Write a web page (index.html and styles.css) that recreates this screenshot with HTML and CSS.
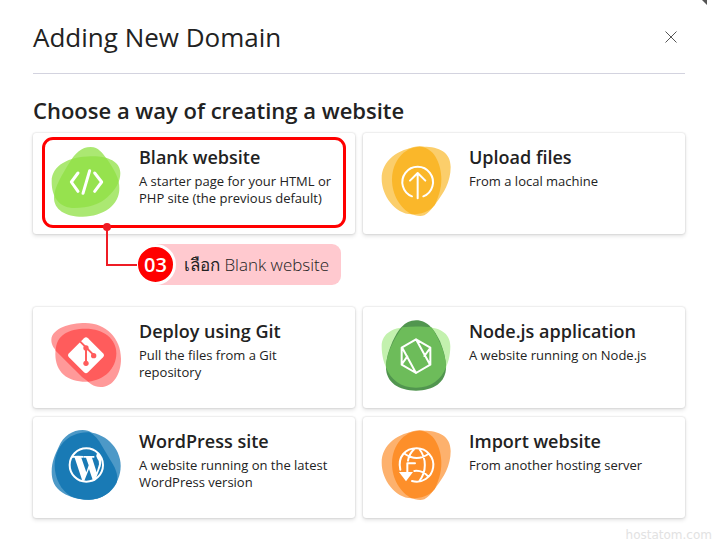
FILE: index.html
```html
<!DOCTYPE html>
<html lang="en">
<head>
    <meta charset="UTF-8">
    <meta name="viewport" content="width=device-width, initial-scale=1.0">
    <title>Adding New Domain</title>
    <link rel="stylesheet" href="styles.css">
</head>
<body>
    <span class="corner"></span>
    <header class="page-header">
        <h1>Adding New Domain</h1>
        <button class="close" type="button" aria-label="Close">
            <svg viewBox="0 0 12 12"><path d="M.5 .5l11 11M11.5 .5l-11 11"/></svg>
        </button>
    </header>

    <main>
        <h2>Choose a way of creating a website</h2>
        <div class="cards">
            <a class="card highlighted" href="#blank">
                <svg class="icon" viewBox="93 66 210 210">
                    <path fill="#8fe043" fill-opacity=".75" d="M212 66C236 66 247 84 263 105C282 133 299 160 298 190C299 240 250 275 188 275C135 275 102 253 102 218C102 188 128 146 149 112C166 84 184 66 212 66Z"/>
                    <path fill="#8fe043" fill-opacity=".75" d="M214 94C262 93 301 109 301 144C301 170 288 192 262 217C239 239 204 249 164 249C117 249 95 215 95 170C95 121 146 95 214 94Z"/>
                    <path class="line thick" d="M174 144L154 171L174 199M209 137L189 205M224 144L245 171L224 199"/>
                </svg>
                <div class="card-text">
                    <h3>Blank website</h3>
                    <p>A starter page for your HTML or PHP site (the previous default)</p>
                </div>
            </a>
            <a class="card" href="#upload">
                <svg class="icon" viewBox="93 66 210 210">
                    <path fill="#fbce6b" d="M205 66C258 62 302 76 302 126C302 171 280 205 260 232C245 257 218 268 185 268C134 266 95 211 95 161C95 108 143 70 205 66Z"/>
                    <path fill="#fbce6b" d="M209 64C250 65 274 113 274 164C274 211 243 273 211 273C168 273 126 221 126 163C126 108 164 63 209 64Z"/>
                    <path fill="#fab72a" d="M209 65C250 66 274 113 274 164C274 191 265 217 254 240C237 261 214 268 185 268C152 252 126 211 126 163C126 108 164 65 209 65Z"/>
                    <path class="line" d="M186 214A46 46 0 1 1 220 214M203 220V144M180 167L203 144L226 167"/>
                </svg>
                <div class="card-text">
                    <h3>Upload files</h3>
                    <p>From a local machine</p>
                </div>
            </a>

            <div class="step">
                <span class="step-number">03</span>
                <span class="step-text" lang="th">เลือก Blank website</span>
            </div>

            <a class="card" href="#git">
                <svg class="icon" viewBox="93 63 210 210">
                    <path fill="#ff9999" d="M196 69C258 69 303 115 303 176C303 223 279 261 242 261C220 261 208 249 186 231L114 158C104 147 94 137 94 119C97 84 150 69 196 69Z"/>
                    <path fill="#ff9999" d="M197 86C250 86 289 116 289 160C289 211 250 245 198 245C142 245 106 217 106 161C106 110 142 86 197 86Z"/>
                    <path fill="#ff5c5c" d="M197 86C250 86 289 116 289 160C289 206 252 241 205 245L186 231L107 152C108 106 145 86 197 86Z"/>
                    <path fill="#fff" d="M192 115Q198 109 204 115L249 160Q255 166 249 172L204 217Q198 223 192 217L147 172Q141 166 147 160Z"/>
                    <path class="branch" d="M180 124L198 142V189M198 142L222 166"/>
                    <g fill="#ff5c5c"><circle cx="198" cy="144" r="8"/><circle cx="198" cy="190" r="8"/><circle cx="221" cy="167" r="8"/></g>
                </svg>
                <div class="card-text">
                    <h3>Deploy using Git</h3>
                    <p>Pull the files from a Git repository</p>
                </div>
            </a>
            <a class="card" href="#node">
                <svg class="icon" viewBox="93 63 210 210">
                    <path fill="#c3f1ae" d="M198 81C260 77 301 94 301 139C301 190 276 263 198 263C121 263 95 190 95 139C95 94 141 77 198 81Z"/>
                    <path fill="#51954f" d="M198 61C235 61 253 91 270 124C281 151 288 177 288 202C288 248 250 272 198 272C146 272 108 248 108 202C108 177 116 151 128 124C144 91 162 61 198 61Z"/>
                    <path fill="#6dbc5a" d="M157 82C185 79 218 79 244 82C263 108 288 159 288 202C274 239 244 263 198 263C151 263 122 239 108 202C108 159 137 108 157 82Z"/>
                    <path class="line" d="M198 118L241 143V194L198 219L155 194V143ZM157 144L198 219M198 118L239 192M156 192L172 169M240 145L223 168"/>
                </svg>
                <div class="card-text">
                    <h3>Node.js application</h3>
                    <p>A website running on Node.js</p>
                </div>
            </a>
            <a class="card" href="#wordpress">
                <svg class="icon" viewBox="93 63 210 210">
                    <path fill="#4d99c7" d="M188 60C211 60 225 72 242 101L280 165C291 184 294 199 290 219C275 249 242 269 207 269C176 269 151 262 128 248C104 233 95 211 95 185C95 155 106 132 116 111C130 77 158 60 188 60Z"/>
                    <path fill="#4d99c7" d="M196 66C253 66 302 112 302 168C302 223 257 269 207 269C148 269 104 225 104 166C104 111 145 66 196 66Z"/>
                    <path fill="#197ab5" d="M209 67C221 74 230 82 242 101L280 165C290 183 294 201 291 214C276 247 246 269 207 269C184 269 165 265 151 258C123 241 104 205 104 166C104 111 145 64 209 67Z"/>
                    <circle class="line" cx="199" cy="165" r="50"/>
                    <path fill="#fff" d="M156 138Q174 137 191 138V143H184L199 187L206 166L198 143H192V138H223V143H216L230 187L237 163Q239 153 232 146Q226 138 231 130L239 131Q247 147 242 169L225 212H219L207 177L193 212H187L164 143H156Z"/>
                </svg>
                <div class="card-text">
                    <h3>WordPress site</h3>
                    <p>A website running on the latest WordPress version</p>
                </div>
            </a>
            <a class="card" href="#import">
                <svg class="icon" viewBox="93 63 210 210">
                    <path fill="#fdb16d" d="M205 63C258 59 302 73 302 123C302 168 280 202 260 229C245 254 218 265 185 265C134 263 95 208 95 158C95 105 143 67 205 63Z"/>
                    <path fill="#fdb16d" d="M209 61C250 62 274 110 274 161C274 208 243 270 211 270C168 270 126 218 126 160C126 105 164 60 209 61Z"/>
                    <path fill="#fd8f2a" d="M209 62C250 63 274 110 274 161C274 188 265 214 254 237C237 258 214 265 185 265C152 249 126 208 126 160C126 105 164 62 209 62Z"/>
                    <path class="line" d="M151 179C142 139 167 115 200 115A50 50 0 1 1 186 213M165 132Q200 156 235 132M193 183Q217 180 235 200M193 117C182 127 176 139 174 152M208 117C230 145 230 185 208 213"/>
                    <path class="line" d="M195 160H172V188"/>
                    <path fill="#fff" d="M147 186H189L168 214Z"/>
                </svg>
                <div class="card-text">
                    <h3>Import website</h3>
                    <p>From another hosting server</p>
                </div>
            </a>
        </div>
    </main>

    <footer>hostatom.com</footer>
</body>
</html>
```
FILE: styles.css
```css
* {
    margin: 0;
    padding: 0;
    box-sizing: border-box;
}

body {
    position: relative;
    padding: 0 35px 0 33px;
    font-family: "Open Sans", "Noto Sans", sans-serif;
    color: #222;
    background: #fff;
}

.corner {
    position: absolute;
    top: 0;
    right: 13px;
    border-top: 5px solid #555;
    border-left: 5px solid transparent;
}

.page-header {
    display: flex;
    justify-content: space-between;
    align-items: center;
    height: 74px;
    border-bottom: 1px solid #d3d3df;
}

h1 {
    font-size: 26px;
    font-weight: 400;
}

.close {
    width: 28px;
    height: 28px;
    border: none;
    background: none;
    cursor: pointer;
}

.close svg {
    display: block;
    width: 12px;
    margin: auto;
    stroke: #555;
    fill: none;
}

h2 {
    padding: 20px 0 7px;
    font-size: 22px;
    font-weight: 600;
    line-height: 32px;
}

.cards {
    display: grid;
    grid-template-columns: 1fr 1fr;
    gap: 9px 8px;
}

.card {
    position: relative;
    display: flex;
    gap: 18px;
    min-height: 101px;
    padding: 14px 16px 16px 18px;
    border-radius: 3px;
    box-shadow: 0 0 2px rgba(0, 0, 0, 0.2), 0 2px 4px rgba(0, 0, 0, 0.12);
    color: inherit;
    text-decoration: none;
}

.icon {
    flex: none;
    width: 70px;
    height: 70px;
    overflow: visible;
}

.line {
    fill: none;
    stroke: #fff;
    stroke-width: 6;
    stroke-linecap: round;
    stroke-linejoin: round;
}

.thick {
    stroke-width: 9;
}

.branch {
    fill: none;
    stroke: #ff5c5c;
    stroke-width: 6;
}

h3 {
    font-size: 18px;
    font-weight: 600;
    line-height: 20px;
}

.card p {
    margin-top: 6px;
    font-size: 13px;
    line-height: 17px;
}

/* red frame round the option to pick */
.highlighted::after {
    content: "";
    position: absolute;
    inset: 4px 9px 6px;
    border: 3px solid #f00;
    border-radius: 11px;
}

.step {
    grid-column: 1 / -1;
    justify-self: start;
    position: relative;
    display: flex;
    align-items: center;
    gap: 8px;
    height: 41px;
    margin: 1px 0 13px 102px;
    padding-right: 12px;
    border-radius: 9px;
    background: linear-gradient(to right, #fff 20px, #ffc9cf 20px);
}

/* line from the frame down to the number */
.step::before {
    content: "";
    position: absolute;
    left: -29px;
    bottom: 19px;
    width: 29px;
    height: 39px;
    border: solid #ee1c25;
    border-width: 0 0 2px 2px;
}

.step::after {
    content: "";
    position: absolute;
    left: -32px;
    top: -21px;
    width: 8px;
    height: 8px;
    border-radius: 50%;
    background: #ee1c25;
}

.step-number {
    width: 41px;
    height: 41px;
    border: 3px solid #fff;
    border-radius: 50%;
    background: #f00;
    color: #fff;
    font-size: 20px;
    font-weight: 600;
    line-height: 35px;
    text-align: center;
}

.step-text {
    font-size: 17px;
    font-weight: 300;
}

footer {
    margin: 8px -27px 0 0;
    color: #e2e2e2;
    font-family: "DejaVu Sans", sans-serif;
    font-size: 12px;
    line-height: 19px;
    text-align: right;
}
```
